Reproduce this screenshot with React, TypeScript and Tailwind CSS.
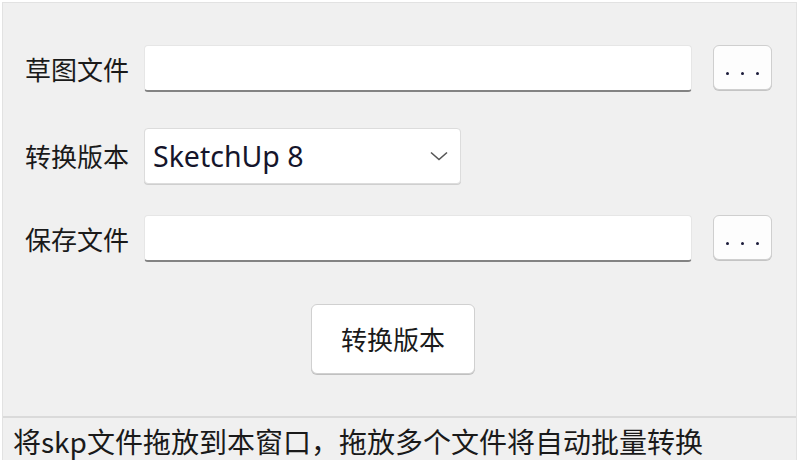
import React from "react";

const cjk = "font-['Microsoft_YaHei','Noto_Sans_CJK_SC',sans-serif]";

function DotsButton() {
  return (
    <button className="shrink-0 w-[59px] h-[45px] ml-[21px] rounded-[6px] border border-[#cfcfcf] bg-[#fdfdfd] flex items-end justify-center gap-[12px] pb-[14px] shadow-[0_1px_0_#c4c4c4]">
      <span className="w-[3px] h-[3px] rounded-full bg-[#1b1b3a]" />
      <span className="w-[3px] h-[3px] rounded-full bg-[#1b1b3a]" />
      <span className="w-[3px] h-[3px] rounded-full bg-[#1b1b3a]" />
    </button>
  );
}

function FileInput() {
  return (
    <div className="shrink-0 w-[548px] h-[47px] rounded-[4px] bg-white border border-[#e6e6e6] border-b-2 border-b-[#838383]" />
  );
}

function Label({ text }: { text: string }) {
  return (
    <div className={`shrink-0 w-[141px] pl-[22px] whitespace-nowrap text-[26px] leading-none text-[#1a1a1a] ${cjk}`}>
      {text}
    </div>
  );
}

export default function App() {
  return (
    <div className="w-[800px] h-[460px] bg-white pt-[2px] pl-[2px] pr-[3px] overflow-hidden">
      <div className="h-[470px] bg-[#f0f0f0] border-l border-t border-r border-[#e2e2e2] flex flex-col">
        <div className="h-[413px] flex flex-col">
          {/* 草图文件 */}
          <div className="flex items-start mt-[42px]">
            <div className="h-[47px] flex items-center">
              <Label text="草图文件" />
            </div>
            <FileInput />
            <DotsButton />
          </div>

          {/* 转换版本 */}
          <div className="flex items-center mt-[36px]">
            <Label text="转换版本" />
            <div className="shrink-0 w-[317px] h-[56px] rounded-[4px] bg-white border border-[#dcdcdc] shadow-[0_1px_0_#cfcfcf] flex items-center justify-between pl-[8px] pr-[12px]">
              <span className="text-[28.5px] leading-none text-[#15152b] font-['Segoe_UI','Noto_Sans',sans-serif]">
                SketchUp 8
              </span>
              <svg width="18" height="10" viewBox="0 0 18 10" fill="none">
                <path d="M1 1.5l8 7 8-7" stroke="#555" strokeWidth="1.6" />
              </svg>
            </div>
          </div>

          {/* 保存文件 */}
          <div className="flex items-start mt-[31px]">
            <div className="h-[47px] flex items-center">
              <Label text="保存文件" />
            </div>
            <FileInput />
            <DotsButton />
          </div>

          {/* 转换按钮 */}
          <div className="mt-[42px] pl-[308px]">
            <button
              className={`w-[164px] h-[70px] rounded-[6px] bg-white border border-[#d0d0d0] shadow-[0_1px_0_#c0c0c0] text-[26px] leading-none text-[#1a1a1a] ${cjk}`}
            >
              转换版本
            </button>
          </div>
        </div>

        <div className="border-t-2 border-[#dadada] pt-[9px] pl-[10px]">
          <div className={`text-[28px] leading-none text-[#1a1a1a] whitespace-nowrap ${cjk}`}>
            将skp文件拖放到本窗口，拖放多个文件将自动批量转换
          </div>
        </div>
      </div>
    </div>
  );
}
